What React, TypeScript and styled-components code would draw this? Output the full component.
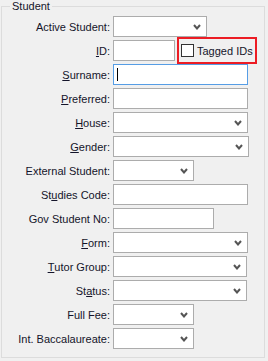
import React from 'react';
import styled, { createGlobalStyle } from 'styled-components';

const GlobalStyle = createGlobalStyle`
  html, body {
    margin: 0;
    padding: 0;
    background: #f0f0f0;
  }
  body {
    font-family: "Liberation Sans", Arial, sans-serif;
    font-size: 11px;
    color: #14142a;
  }
`;

const Group = styled.fieldset`
  box-sizing: border-box;
  width: 264px;
  margin: 0 0 0 1px;
  padding: 0 0 8px 0;
  border: 1px solid #dcdcdc;
  min-width: 0;
`;

const Title = styled.legend`
  margin-left: 8px;
  padding: 0 2px;
  font-size: 11px;
  line-height: 13px;
`;

const Grid = styled.div`
  display: grid;
  grid-template-columns: 108px 1fr;
  column-gap: 3px;
  row-gap: 3px;
  margin-top: 3px;
`;

const Label = styled.div`
  display: flex;
  align-items: center;
  justify-content: flex-end;
  height: 21px;
  white-space: nowrap;
  u {
    text-decoration: underline;
    text-underline-offset: 1px;
  }
`;

const Field = styled.div`
  display: flex;
  align-items: center;
  gap: 2px;
  height: 21px;
`;

const Box = styled.div<{ $w: number; $focus?: boolean }>`
  box-sizing: border-box;
  position: relative;
  width: ${p => p.$w}px;
  height: 21px;
  background: #fff;
  border: 1px solid ${p => (p.$focus ? '#569de5' : '#acacac')};
  display: flex;
  align-items: center;
  justify-content: flex-end;
`;

const Caret = styled.span`
  position: absolute;
  left: 3px;
  top: 3px;
  width: 1px;
  height: 13px;
  background: #000;
`;

const Chevron = styled.svg`
  margin-right: 5px;
`;

const Tagged = styled.label`
  box-sizing: border-box;
  display: flex;
  align-items: center;
  gap: 3px;
  width: 80px;
  height: 27px;
  margin: -3px 0;
  padding-left: 2px;
  border: 2px solid #ec1c24;
`;

const Check = styled.span`
  box-sizing: border-box;
  width: 13px;
  height: 13px;
  background: #fff;
  border: 1px solid #333;
`;

type Row = {
  label: React.ReactNode;
  w: number;
  select?: boolean;
  focus?: boolean;
  tagged?: boolean;
};

const rows: Row[] = [
  { label: 'Active Student:', w: 94, select: true },
  { label: <><u>I</u>D:</>, w: 62, tagged: true },
  { label: <><u>S</u>urname:</>, w: 135, focus: true },
  { label: <><u>P</u>referred:</>, w: 135 },
  { label: <><u>H</u>ouse:</>, w: 135, select: true },
  { label: <><u>G</u>ender:</>, w: 136, select: true },
  { label: 'External Student:', w: 81, select: true },
  { label: <>St<u>u</u>dies Code:</>, w: 135 },
  { label: 'Gov Student No:', w: 101 },
  { label: <><u>F</u>orm:</>, w: 135, select: true },
  { label: <><u>T</u>utor Group:</>, w: 134, select: true },
  { label: <>St<u>a</u>tus:</>, w: 134, select: true },
  { label: 'Full Fee:', w: 81, select: true },
  { label: 'Int. Baccalaureate:', w: 81, select: true },
];

function App() {
  return (
    <>
      <GlobalStyle />
      <Group>
        <Title>Student</Title>
        <Grid>
          {rows.map((r, i) => (
            <React.Fragment key={i}>
              <Label>{r.label}</Label>
              <Field>
                <Box $w={r.w} $focus={r.focus}>
                  {r.focus && <Caret />}
                  {r.select && (
                    <Chevron width="8" height="6" viewBox="0 0 8 6">
                      <polyline points="1,1 4,4.5 7,1" fill="none" stroke="#555" strokeWidth="2" />
                    </Chevron>
                  )}
                </Box>
                {r.tagged && (
                  <Tagged>
                    <Check />
                    Tagged IDs
                  </Tagged>
                )}
              </Field>
            </React.Fragment>
          ))}
        </Grid>
      </Group>
    </>
  );
}

export default App;
